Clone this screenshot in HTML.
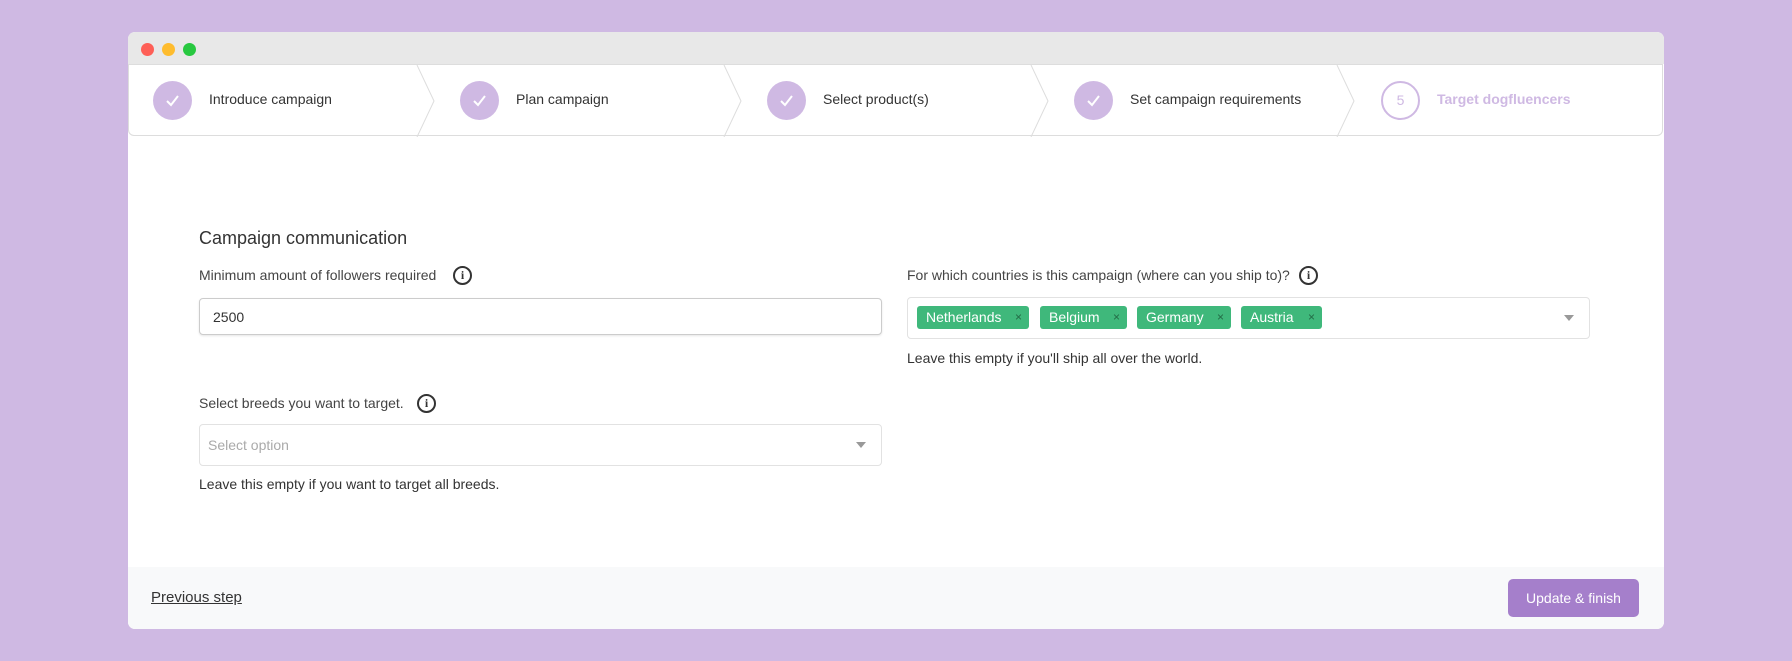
<!DOCTYPE html>
<html><head><meta charset="utf-8"><style>
*{box-sizing:border-box;margin:0;padding:0}
body{width:1792px;height:661px;background:#cfb9e3;font-family:"Liberation Sans",sans-serif;color:#333;position:relative;overflow:hidden}
.win{position:absolute;left:128px;top:32px;width:1536px;height:597px;background:#fff;border-radius:7px;overflow:hidden}
.tb{position:absolute;left:0;top:0;width:100%;height:32px;background:#e8e8e8}
.dot{position:absolute;top:11px;width:13px;height:13px;border-radius:50%}
.step{position:absolute;left:0;top:32px;width:1535px;height:72px;border:1px solid #ddd;border-radius:0 0 6px 6px;background:#fff}
.c{position:absolute;top:16px;width:39px;height:39px;border-radius:50%;background:#cfb9e3}
.c svg{position:absolute;left:10px;top:10px}
.st{position:absolute;top:26px;font-size:14px;color:#333}
.abs{position:absolute}
.lbl{font-size:14px;color:#444}
.info{position:absolute;width:19px;height:19px;border:2px solid #333;border-radius:50%;font:bold 12px "Liberation Serif",serif;text-align:center;line-height:15px;color:#333}
.box{position:absolute;border:1px solid #e2e2e2;border-radius:4px;background:#fff}
.tag{position:absolute;top:8px;height:23px;background:#3fb87b;color:#fff;border-radius:3px;font-size:14px;line-height:23px;padding-left:9px}
.tag i{position:absolute;right:7px;font-style:normal;font-size:12px;color:#236b46}
.arr{position:absolute;width:0;height:0;border-left:5px solid transparent;border-right:5px solid transparent;border-top:6px solid #999}
</style></head><body>
<div class="win">
<div class="tb"></div>
<div class="dot" style="left:13px;background:#fe5f57"></div>
<div class="dot" style="left:34px;background:#febc2e"></div>
<div class="dot" style="left:55px;background:#28c840"></div>
<div class="step">
<svg class="abs" style="left:0;top:0" width="1535" height="72">
<g fill="none" stroke="#ddd" stroke-width="1">
<path d="M288 0 L305 36 L288 72"/><path d="M595 0 L612 36 L595 72"/><path d="M902 0 L919 36 L902 72"/><path d="M1208 0 L1225 36 L1208 72"/>
</g></svg>
<div class="c" style="left:24px"><svg width="19" height="19"><path d="M4 10 L8 14 L15 5" fill="none" stroke="#fff" stroke-width="2"/></svg></div>
<div class="st" style="left:80px">Introduce campaign</div>
<div class="c" style="left:331px"><svg width="19" height="19"><path d="M4 10 L8 14 L15 5" fill="none" stroke="#fff" stroke-width="2"/></svg></div>
<div class="st" style="left:387px">Plan campaign</div>
<div class="c" style="left:638px"><svg width="19" height="19"><path d="M4 10 L8 14 L15 5" fill="none" stroke="#fff" stroke-width="2"/></svg></div>
<div class="st" style="left:694px">Select product(s)</div>
<div class="c" style="left:945px"><svg width="19" height="19"><path d="M4 10 L8 14 L15 5" fill="none" stroke="#fff" stroke-width="2"/></svg></div>
<div class="st" style="left:1001px">Set campaign requirements</div>
<div class="c" style="left:1252px;background:#fff;border:2px solid #cfb9e3;color:#cfb9e3;font-size:14px;text-align:center;line-height:35px">5</div>
<div class="st" style="left:1308px;color:#cfb9e3;font-weight:bold">Target dogfluencers</div>
</div>
<div class="abs" style="left:71px;top:196px;font-size:18px;color:#333">Campaign communication</div>
<div class="abs lbl" style="left:71px;top:235px">Minimum amount of followers required</div>
<div class="info" style="left:325px;top:234px">i</div>
<div class="box" style="left:71px;top:266px;width:683px;height:37px;border-color:#ccc;box-shadow:0 1px 2px rgba(0,0,0,.1)"><span class="abs" style="left:13px;top:10px;font-size:14px;color:#333">2500</span></div>
<div class="abs lbl" style="left:779px;top:235px">For which countries is this campaign (where can you ship to)?</div>
<div class="info" style="left:1171px;top:234px">i</div>
<div class="box" style="left:779px;top:265px;width:683px;height:42px">
<div class="tag" style="left:9px;width:112px">Netherlands<i>×</i></div>
<div class="tag" style="left:132px;width:87px">Belgium<i>×</i></div>
<div class="tag" style="left:229px;width:94px">Germany<i>×</i></div>
<div class="tag" style="left:333px;width:81px">Austria<i>×</i></div>
<div class="arr" style="left:656px;top:17px"></div>
</div>
<div class="abs lbl" style="left:779px;top:318px;color:#333">Leave this empty if you'll ship all over the world.</div>
<div class="abs lbl" style="left:71px;top:363px">Select breeds you want to target.</div>
<div class="info" style="left:289px;top:362px">i</div>
<div class="box" style="left:71px;top:392px;width:683px;height:42px"><span class="abs" style="left:8px;top:12px;font-size:14px;color:#aaa">Select option</span><div class="arr" style="left:656px;top:17px"></div></div>
<div class="abs lbl" style="left:71px;top:444px;color:#333">Leave this empty if you want to target all breeds.</div>
<div class="abs" style="left:0;top:535px;width:1536px;height:62px;background:#f8f9fa"></div>
<div class="abs" style="left:23px;top:557px;font-size:15px;color:#333;text-decoration:underline">Previous step</div>
<div class="abs" style="left:1380px;top:547px;width:131px;height:38px;background:#a57fcb;border-radius:5px;color:#fff;font-size:14px;text-align:center;line-height:38px">Update &amp; finish</div>
</div>
</body></html>
